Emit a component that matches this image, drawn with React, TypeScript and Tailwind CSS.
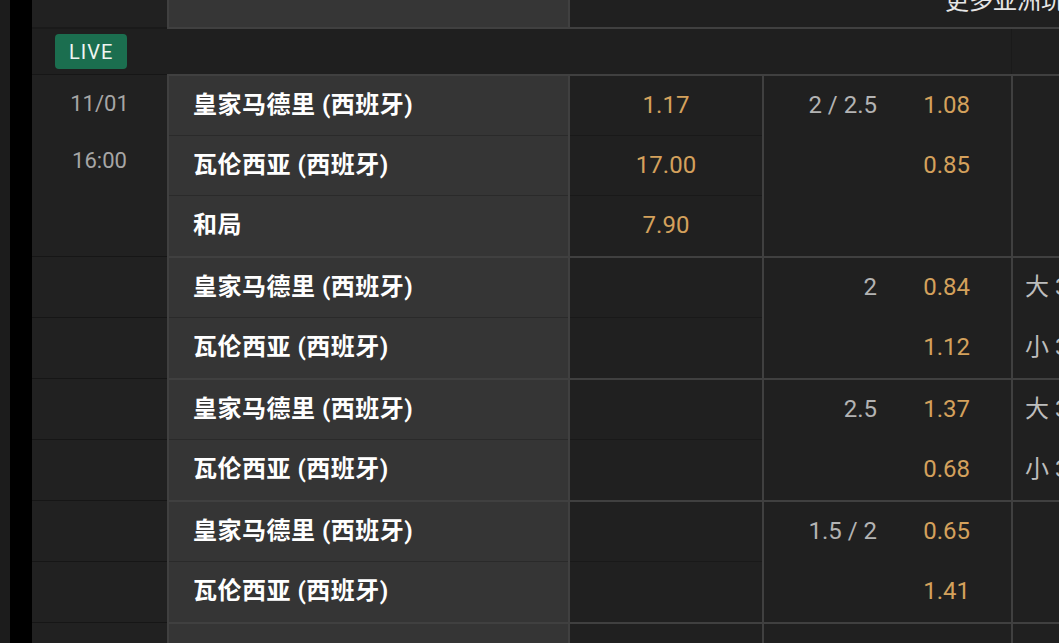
import React from 'react'

// ── Data ──────────────────────────────────────────────────────────────────────

type Group = {
  date?: string[]
  teams: string[]
  odds: string[]
  line?: string
  hdp: string[]
  ou: string[]
}

const HOME = '皇家马德里 (西班牙)'
const AWAY = '瓦伦西亚 (西班牙)'

const GROUPS: Group[] = [
  { date: ['11/01', '16:00'], teams: [HOME, AWAY, '和局'], odds: ['1.17', '17.00', '7.90'], line: '2 / 2.5', hdp: ['1.08', '0.85', ''], ou: ['', '', ''] },
  { teams: [HOME, AWAY], odds: ['', ''], line: '2', hdp: ['0.84', '1.12'], ou: ['大 3.5', '小 3.5'] },
  { teams: [HOME, AWAY], odds: ['', ''], line: '2.5', hdp: ['1.37', '0.68'], ou: ['大 3', '小 3'] },
  { teams: [HOME, AWAY], odds: ['', ''], line: '1.5 / 2', hdp: ['0.65', '1.41'], ou: ['', ''] },
  { teams: [''], odds: [''], hdp: [''], ou: [''] },
]

const FONT = "font-['Roboto','Noto_Sans_CJK_SC',sans-serif]"

// ── Group of rows ─────────────────────────────────────────────────────────────

function MatchGroup({ g }: { g: Group }) {
  const n = g.teams.length
  return (
    <div className="flex">
      {/* date column */}
      <div className="w-[135px] shrink-0 bg-[#212121] border-t border-[#161616] pt-px">
        {g.date ? (
          <div className="flex flex-col items-center pt-[16px] text-[22px] leading-[24px] text-[#a6a6a6]">
            <span>{g.date[0]}</span>
            <span className="mt-[33px]">{g.date[1]}</span>
          </div>
        ) : (
          g.teams.map((_, i) => (
            <div key={i} className={`h-[60px] ${i < n - 1 ? 'border-b border-[#161616]' : ''}`} />
          ))
        )}
      </div>

      {/* teams */}
      <div className="w-[401px] shrink-0 bg-[#353535] border-l-2 border-t-2 border-[#404040]">
        {g.teams.map((t, i) => (
          <div
            key={i}
            className={`h-[60px] flex items-center pl-[24px] pb-[2px] text-[24px] tracking-[0.5px] font-bold text-white ${i < n - 1 ? 'border-b border-[#2a2a2a]' : ''}`}
          >
            {t}
          </div>
        ))}
      </div>

      {/* 1x2 odds */}
      <div className="w-[194px] shrink-0 bg-[#202020] border-l-2 border-t-2 border-[#404040]">
        {g.odds.map((o, i) => (
          <div
            key={i}
            className={`h-[60px] flex items-center justify-center pb-[2px] text-[24px] text-[#d4a15c] ${i < n - 1 ? 'border-b border-[#191919]' : ''}`}
          >
            {o}
          </div>
        ))}
      </div>

      {/* handicap */}
      <div className="w-[249px] shrink-0 bg-[#202020] border-l-2 border-t-2 border-[#404040]">
        {g.hdp.map((o, i) => (
          <div key={i} className="h-[60px] flex items-center pb-[2px] text-[24px]">
            <span className="w-[113px] text-right text-[#b3b3b3]">{i === 0 ? g.line : ''}</span>
            <span className="w-[93px] text-right text-[#d4a15c]">{o}</span>
          </div>
        ))}
      </div>

      {/* over / under */}
      <div className="w-[200px] shrink-0 bg-[#202020] border-l-2 border-t-2 border-[#404040]">
        {g.ou.map((o, i) => (
          <div key={i} className="h-[60px] flex items-center pl-[12px] pb-[2px] text-[24px] text-[#bdbdbd] whitespace-nowrap">
            {o}
          </div>
        ))}
      </div>
    </div>
  )
}

// ── Main component ────────────────────────────────────────────────────────────

export default function App() {
  return (
    <div className={`w-[1059px] h-[643px] overflow-hidden flex bg-[#1c1c1c] ${FONT}`}>
      <div className="w-[10px] shrink-0 bg-[#1c1c1c]" />
      <div className="w-[22px] shrink-0 bg-black" />

      <div className="flex-1 min-w-0 overflow-hidden">
        <div className="w-[1200px] -mt-[30px]">
          {/* top row, cut off by the window */}
          <div className="flex h-[59px]">
            <div className="w-[135px] shrink-0 bg-[#212121] border-b-2 border-[#1a1a1a]" />
            <div className="w-[401px] shrink-0 bg-[#363636] border-l-2 border-b-2 border-[#404040]" />
            <div className="flex-1 bg-[#202020] border-l-2 border-b-2 border-[#404040] flex items-center pt-[4px] pl-[375px] text-[24px] text-[#e6e6e6] whitespace-nowrap">
              更多亚洲玩法
            </div>
          </div>

          {/* LIVE header */}
          <div className="flex h-[45px] bg-[#1f1f1f]">
            <div className="w-[979px] shrink-0 flex items-center pl-[23px]">
              <span className="h-[35px] px-[14px] flex items-center rounded-[4px] bg-[#1b6e4f] text-[20px] tracking-[1px] text-[#eef5f1]">
                LIVE
              </span>
            </div>
            <div className="flex-1 border-l border-[#1a1a1a]" />
          </div>

          {GROUPS.map((g, i) => (
            <MatchGroup key={i} g={g} />
          ))}
        </div>
      </div>
    </div>
  )
}
